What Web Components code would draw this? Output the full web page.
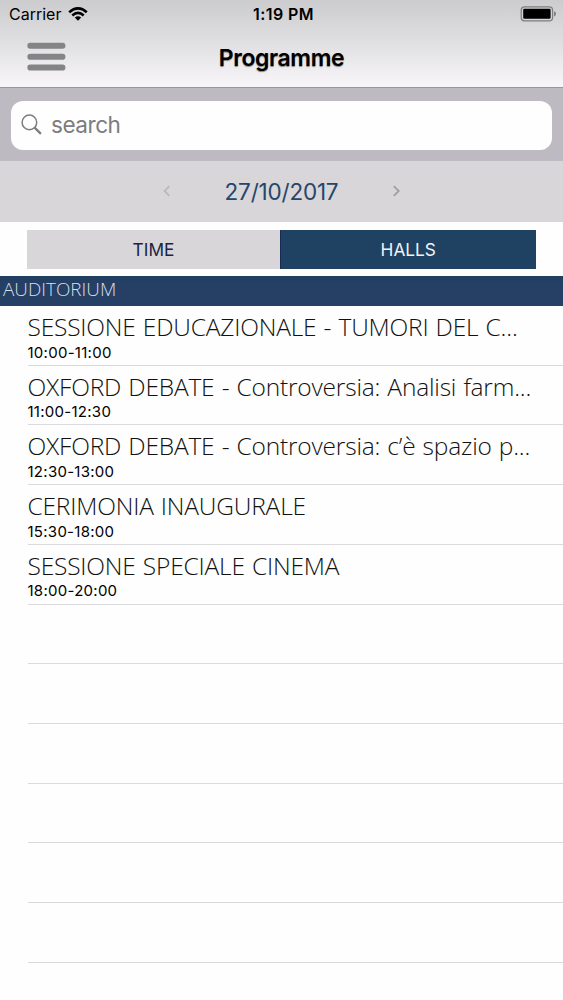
<!DOCTYPE html>
<html lang="it">
<head>
<meta charset="utf-8">
<title>Programme</title>
<style>
    body {
        margin: 0;
        height: 1000px;
        overflow: hidden;
        background: #fefefe;
        color: #000;
        font-family: Inter, "Liberation Sans", sans-serif;
    }
</style>
</head>
<body>
<app-screen>
    <app-header slot="top" carrier="Carrier" time="1:19 PM">Programme</app-header>
    <search-bar slot="top">search</search-bar>
    <date-picker slot="top">27/10/2017</date-picker>
    <tab-switch slot="top">
        <tab-button>TIME</tab-button>
        <tab-button active>HALLS</tab-button>
    </tab-switch>
    <hall-title>AUDITORIUM</hall-title>
    <session-row time="10:00-11:00">SESSIONE EDUCAZIONALE - TUMORI DEL C...</session-row>
    <session-row time="11:00-12:30">OXFORD DEBATE - Controversia: Analisi farm...</session-row>
    <session-row time="12:30-13:00">OXFORD DEBATE - Controversia: c’è spazio p...</session-row>
    <session-row time="15:30-18:00">CERIMONIA INAUGURALE</session-row>
    <session-row time="18:00-20:00">SESSIONE SPECIALE CINEMA</session-row>
    <session-row></session-row>
    <session-row></session-row>
    <session-row></session-row>
    <session-row></session-row>
    <session-row></session-row>
    <session-row></session-row>
</app-screen>

<script>
class BaseElement extends HTMLElement {
    constructor() {
        super();
        const template = document.createElement('template');
        template.innerHTML = this.constructor.styles + this.constructor.markup;
        this.attachShadow({ mode: 'open' });
        this.shadowRoot.appendChild(template.content.cloneNode(true));
    }

    attributeChangedCallback(name, oldValue, newValue) {
        const target = this.shadowRoot.querySelector('#' + name);
        if (target) {
            target.textContent = newValue;
        }
    }
}

class AppScreen extends BaseElement {
    static get styles() {
        return `
        <style>
            :host {
                display: flex;
                flex-direction: column;
                height: 1000px;
                overflow: hidden;
            }
            header, main {
                display: flex;
                flex-direction: column;
            }
            header { flex: none; }
            main { flex: 1; }
        </style>
        `;
    }

    static get markup() {
        return `
            <header><slot name="top"></slot></header>
            <main><slot></slot></main>
        `;
    }
}

class AppHeader extends BaseElement {
    static get styles() {
        return `
        <style>
            :host {
                display: flex;
                flex-direction: column;
                box-sizing: border-box;
                height: 88px;
                border-bottom: 1px solid #97969b;
                background: linear-gradient(#cccbcd, #dedde0 45%, #f8f6f9);
            }
            .status, .nav {
                display: grid;
                grid-template-columns: 1fr auto 1fr;
                align-items: center;
            }
            .status {
                height: 28px;
                padding: 0 7px 0 9px;
                font-size: 16px;
            }
            .left {
                display: flex;
                align-items: center;
                gap: 7px;
            }
            #time {
                padding-left: 2px;
                font-weight: 600;
                font-size: 16px;
                letter-spacing: 0.4px;
            }
            .battery { justify-self: end; }
            .nav {
                height: 57px;
                padding: 0 27px;
            }
            .title {
                padding-top: 3px;
                font-size: 23px;
                font-weight: 600;
                letter-spacing: -0.4px;
                text-shadow: 0 1px 1px rgba(0, 0, 0, 0.45);
            }
            svg { display: block; }
        </style>
        `;
    }

    static get markup() {
        return `
            <div class="status">
                <div class="left">
                    <span id="carrier"></span>
                    <svg width="20" height="14" viewBox="0 0 20 14">
                        <g fill="none" stroke="#000" stroke-width="2.6">
                            <path d="M1.2 5.2Q10 -2.5 18.8 5.2"/>
                            <path d="M4.3 8.5Q10 3.4 15.7 8.5"/>
                        </g>
                        <path d="M6.8 10.6Q10 8 13.2 10.6L10 13.8Z"/>
                    </svg>
                </div>
                <span id="time"></span>
                <svg class="battery" width="36" height="16" viewBox="0 0 36 16">
                    <rect x="1.2" y="0.8" width="31.4" height="14" rx="3.4" fill="none" stroke="#7d7c7f" stroke-width="1.2"/>
                    <rect x="3.2" y="2.8" width="27.4" height="10" rx="1.2"/>
                    <path d="M34 5.2Q36 5.8 36 7.8T34 10.4Z" fill="#7d7c7f"/>
                </svg>
            </div>
            <div class="nav">
                <svg width="39" height="29" viewBox="0 0 39 29" fill="#848386">
                    <rect x="0.4" y="0.8" width="38" height="6" rx="2.8"/>
                    <rect x="0.4" y="11.7" width="38" height="6" rx="2.8"/>
                    <rect x="0.4" y="22.6" width="38" height="6" rx="2.8"/>
                </svg>
                <span class="title"><slot></slot></span>
            </div>
        `;
    }

    static get observedAttributes() {
        return ['carrier', 'time'];
    }
}

class SearchBar extends BaseElement {
    static get styles() {
        return `
        <style>
            :host {
                display: block;
                box-sizing: border-box;
                height: 73px;
                padding: 12.5px 11px 11px;
                background: #bdbbc1;
            }
            .field {
                display: flex;
                align-items: center;
                gap: 9px;
                height: 49px;
                padding: 0 10px 2px;
                box-sizing: border-box;
                border-radius: 12px;
                background: #fefefe;
                color: #7d7c7e;
                font-size: 22.6px;
                letter-spacing: -0.5px;
            }
        </style>
        `;
    }

    static get markup() {
        return `
            <div class="field">
                <svg width="21" height="21" viewBox="0 0 21 21" fill="none" stroke="#7d7c7e">
                    <circle cx="8.4" cy="8.4" r="7.3" stroke-width="1.5"/>
                    <path d="M13.6 13.6L19.9 19.9" stroke-width="2.2"/>
                </svg>
                <span><slot></slot></span>
            </div>
        `;
    }
}

class DatePicker extends BaseElement {
    static get styles() {
        return `
        <style>
            :host {
                display: flex;
                justify-content: center;
                align-items: center;
                gap: 54px;
                height: 60.5px;
                background: #d8d6d8;
                color: #26456c;
                font-size: 22.5px;
                letter-spacing: -0.2px;
            }
            svg {
                fill: none;
                stroke-width: 1.8;
            }
        </style>
        `;
    }

    static get markup() {
        return `
            <svg width="8" height="12" viewBox="0 0 8 12" stroke="#bbb9bc"><path d="M6.4 1.2L1.6 6L6.4 10.8"/></svg>
            <span><slot></slot></span>
            <svg width="8" height="12" viewBox="0 0 8 12" stroke="#a09ea1"><path d="M1.8 1.2L6.8 6L1.8 10.8"/></svg>
        `;
    }
}

class TabSwitch extends BaseElement {
    static get styles() {
        return `
        <style>
            :host {
                display: grid;
                grid-template-columns: 253px 1fr;
                height: 39px;
                padding: 8.5px 27.5px 7px 27px;
            }
        </style>
        `;
    }

    static get markup() {
        return `<slot></slot>`;
    }
}

class TabButton extends BaseElement {
    static get styles() {
        return `
        <style>
            :host {
                display: flex;
                justify-content: center;
                align-items: center;
                background: #d8d6d8;
                color: #1b2346;
                font-size: 17.3px;
            }
            :host([active]) {
                box-sizing: border-box;
                border-left: 1.5px solid #162c55;
                background: #1f4162;
                color: #f0f3f8;
            }
        </style>
        `;
    }

    static get markup() {
        return `<slot></slot>`;
    }
}

class HallTitle extends BaseElement {
    static get styles() {
        return `
        <style>
            :host {
                display: flex;
                align-items: center;
                flex: none;
                box-sizing: border-box;
                height: 30px;
                padding: 0 3px 4px;
                background: linear-gradient(#203f60, #263f65 25%);
                color: #d5dfec;
                font: 300 18.9px "Open Sans", sans-serif;
            }
        </style>
        `;
    }

    static get markup() {
        return `<slot></slot>`;
    }
}

class SessionRow extends BaseElement {
    static get styles() {
        return `
        <style>
            :host {
                display: block;
                flex: none;
                box-sizing: border-box;
                height: 59.73px;
                margin-left: 27.5px;
                padding-top: 5px;
                border-bottom: 1px solid #dad9dc;
                white-space: nowrap;
            }
            .title {
                font: 300 24.5px/32px "Open Sans", sans-serif;
                letter-spacing: -0.19px;
                word-spacing: 1px;
                color: #111;
            }
            #time {
                padding-top: 0.6px;
                font-size: 15px;
                line-height: 18px;
                letter-spacing: 0.27px;
            }
        </style>
        `;
    }

    static get markup() {
        return `
            <div class="title"><slot></slot></div>
            <div id="time"></div>
        `;
    }

    static get observedAttributes() {
        return ['time'];
    }
}

customElements.define('app-screen', AppScreen);
customElements.define('app-header', AppHeader);
customElements.define('search-bar', SearchBar);
customElements.define('date-picker', DatePicker);
customElements.define('tab-switch', TabSwitch);
customElements.define('tab-button', TabButton);
customElements.define('hall-title', HallTitle);
customElements.define('session-row', SessionRow);
</script>
</body>
</html>
